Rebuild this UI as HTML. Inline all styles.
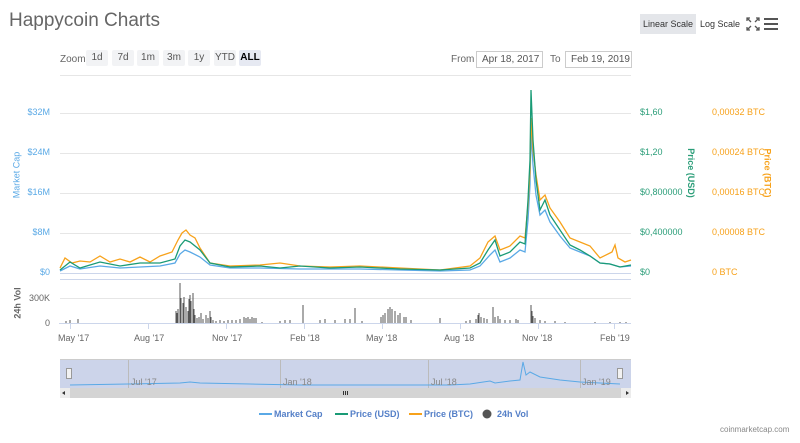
<!DOCTYPE html>
<html><head><meta charset="utf-8"><style>
body{margin:0;width:800px;height:443px;background:#fff;font-family:"Liberation Sans",sans-serif;overflow:hidden;position:relative}
.a{position:absolute;white-space:nowrap}
.btn{position:absolute;top:50px;height:16px;background:#f2f3f5;font-size:10px;color:#555;text-align:center;line-height:16px;border-radius:2px}
.in{position:absolute;top:51px;height:15px;border:1px solid #ccc;font-size:10px;color:#555;line-height:15px;padding-left:5px}
.ly{font-size:9px;color:#5aa9e6;text-align:right;width:50px;left:0}
.g{font-size:9px;color:#2a9d78;left:640px}
.o{font-size:9px;color:#f7a21b;left:712px}
.x{font-size:9px;color:#666;top:333px}
</style></head><body>
<div class="a" style="left:9px;top:10px;font-size:19px;color:#666">Happycoin Charts</div>
<div class="a" style="left:640px;top:14px;width:56px;height:20px;background:#e4e6ea;font-size:9px;color:#333;line-height:20px;text-align:center">Linear Scale</div>
<div class="a" style="left:700px;top:14px;font-size:9px;color:#333;line-height:20px">Log Scale</div>
<svg class="a" style="left:746px;top:17px" width="14" height="14"><g stroke="#555" stroke-width="1.3" fill="none"><path d="M1 4V1H4M10 1H13V4M13 10V13H10M4 13H1V10M1 1L5 5M13 1L9 5M13 13L9 9M1 13L5 9"/></g></svg>
<svg class="a" style="left:764px;top:18px" width="14" height="12"><g fill="#555"><rect y="0" width="14" height="2"/><rect y="5" width="14" height="2"/><rect y="10" width="14" height="2"/></g></svg>
<div class="a" style="left:60px;top:54px;font-size:10px;color:#666">Zoom</div>
<div class="btn" style="left:86px;width:22px">1d</div>
<div class="btn" style="left:112px;width:22px">7d</div>
<div class="btn" style="left:137px;width:22px">1m</div>
<div class="btn" style="left:163px;width:22px">3m</div>
<div class="btn" style="left:188px;width:22px">1y</div>
<div class="btn" style="left:214px;width:22px">YTD</div>
<div class="btn" style="left:239px;width:22px;background:#e6e9f2;color:#000;font-weight:bold">ALL</div>
<div class="a" style="left:451px;top:54px;font-size:10px;color:#666">From</div>
<div class="in" style="left:476px;width:60px">Apr 18, 2017</div>
<div class="a" style="left:550px;top:54px;font-size:10px;color:#666">To</div>
<div class="in" style="left:565px;width:60px">Feb 19, 2019</div>
<div class="a ly" style="top:107px">$32M</div>
<div class="a ly" style="top:147px">$24M</div>
<div class="a ly" style="top:187px">$16M</div>
<div class="a ly" style="top:227px">$8M</div>
<div class="a ly" style="top:267px">$0</div>
<div class="a" style="left:-7px;top:170px;transform:rotate(-90deg);font-size:9px;color:#5aa9e6">Market Cap</div>
<div class="a" style="left:2px;top:298px;transform:rotate(-90deg);font-size:9px;color:#666;font-weight:bold">24h Vol</div>
<div class="a ly" style="top:293px;color:#666">300K</div>
<div class="a ly" style="top:318px;color:#666">0</div>
<div class="a g" style="top:107px">$1,60</div>
<div class="a g" style="top:147px">$1,20</div>
<div class="a g" style="top:187px">$0,800000</div>
<div class="a g" style="top:227px">$0,400000</div>
<div class="a g" style="top:267px">$0</div>
<div class="a o" style="top:107px">0,00032 BTC</div>
<div class="a o" style="top:147px">0,00024 BTC</div>
<div class="a o" style="top:187px">0,00016 BTC</div>
<div class="a o" style="top:227px">0,00008 BTC</div>
<div class="a o" style="top:267px">0 BTC</div>
<div class="a" style="left:666px;top:168px;transform:rotate(90deg);font-size:9px;color:#2a9d78;font-weight:bold">Price (USD)</div>
<div class="a" style="left:743px;top:168px;transform:rotate(90deg);font-size:9px;color:#f7a21b;font-weight:bold">Price (BTC)</div>
<svg class="a" style="left:0;top:0" width="800" height="443">
<g stroke="#e6e6e6" stroke-width="1"><path d="M60 75.5H631M60 113.5H631M60 153.5H631M60 193.5H631M60 233.5H631M60 298.5H631"/></g>
<path d="M60 273.5H631M59 323.5H631M60 279.5H631" stroke="#ccd6eb"/>
<g stroke="#ccd6eb"><path d="M70.5 324v5M148.5 324v5M226.5 324v5M304.5 324v5M382.5 324v5M460.5 324v5M538.5 324v5M614.5 324v5"/></g>
<g stroke="#555" stroke-width="1">
<path d="M66 323v-2M70 323v-3M78 323v-4M176 323v-12M177 323v-10M178 323v-14M180 323v-40M181 323v-25M183 323v-20M184 323v-26M186 323v-16M188 323v-12M189 323v-24M190 323v-28M191 323v-22M193 323v-30M194 323v-14M195 323v-8M197 323v-5M199 323v-6M201 323v-10M203 323v-4M206 323v-8M208 323v-5M210 323v-12M211 323v-6M213 323v-3M216 323v-2M220 323v-3M224 323v-2M228 323v-3M232 323v-3M236 323v-3M240 323v-4M244 323v-6M246 323v-5M248 323v-6M250 323v-4M252 323v-6M254 323v-5M256 323v-5M262 323v-1M280 323v-2M285 323v-3M290 323v-3M303 323v-18M320 323v-3M325 323v-4M335 323v-3M345 323v-4M350 323v-4M355 323v-15M362 323v-2M381 323v-6M383 323v-8M385 323v-10M388 323v-14M390 323v-16M392 323v-14M395 323v-12M398 323v-8M400 323v-10M404 323v-6M406 323v-6M411 323v-3M440 323v-5M466 323v-2M470 323v-3M476 323v-4M478 323v-8M479 323v-10M481 323v-6M484 323v-5M487 323v-4M493 323v-16M495 323v-6M498 323v-7M500 323v-4M505 323v-3M510 323v-3M516 323v-4M518 323v-3M531 323v-18M532 323v-12M533 323v-7M535 323v-5M540 323v-3M545 323v-2M555 323v-2M565 323v-1M595 323v-1M610 323v-1M620 323v-1M626 323v-1"/></g>
<polyline fill="none" stroke="#5aa9e6" stroke-width="1.3" points="60,271 70,266 80,269 100,266 120,268 140,267 160,266 175,263 180,254 185,250 190,252 200,257 210,265 230,268 260,268 300,269 360,269 400,270 440,271 470,270 480,266 490,255 495,250 500,262 510,258 520,250 525,252 528,220 530,185 531,132 533,165 536,195 540,215 545,210 550,222 560,236 570,248 580,252 590,256 600,263 610,264 620,267 631,266"/>
<polyline fill="none" stroke="#f7a21b" stroke-width="1.3" points="60,268 65,258 72,263 80,261 90,262 100,256 110,262 120,259 130,262 140,257 150,262 160,256 172,252 178,240 182,233 186,230 190,235 195,238 200,248 210,263 230,266 260,265 280,263 300,266 330,267 360,266 400,268 440,270 470,266 480,258 488,242 495,236 500,250 510,246 520,236 525,238 528,205 530,172 531,118 533,150 536,175 540,200 545,195 550,208 560,222 570,238 580,242 590,246 600,258 612,252 615,245 618,258 625,262 631,260"/>
<polyline fill="none" stroke="#1a9b76" stroke-width="1.3" points="60,270 70,262 80,268 100,262 120,266 140,263 160,263 175,259 180,246 185,240 190,242 200,250 210,263 230,267 260,266 280,268 300,266 330,268 360,267 400,269 440,270 470,268 480,263 488,250 495,240 500,256 510,252 520,242 525,244 528,200 530,160 531,90 533,140 536,180 540,210 545,200 550,215 560,230 570,245 580,250 590,256 600,263 610,264 620,267 631,265"/>
<rect x="60" y="360" width="571" height="28" fill="#ccd4ea"/>
<path d="M60 359.5H631" stroke="#ccc"/>
<g stroke="#bbb"><path d="M128.5 360v28M280.5 360v28M428.5 360v28M580.5 360v28"/></g>
<polyline fill="none" stroke="#5aa9e6" points="70,385 130,384 180,383 190,382 200,383 250,384 300,385 380,385 450,385 470,384 490,381 495,383 510,381 520,380 523,362 526,375 530,372 540,377 560,380 580,382 600,383 620,384"/>
<g font-size="9" fill="#888"><text x="131" y="385">Jul '17</text><text x="283" y="385">Jan '18</text><text x="431" y="385">Jul '18</text><text x="582" y="385">Jan '19</text></g>
<rect x="60" y="388" width="571" height="10" fill="#d4d4d4"/>
<rect x="60" y="388" width="10" height="10" fill="#ececec"/><rect x="621" y="388" width="10" height="10" fill="#ececec"/>
<path d="M62 393l3-2v4zM629 393l-3-2v4z" fill="#333"/>
<path d="M343.5 391v4M345.5 391v4M347.5 391v4" stroke="#333"/>
<rect x="66.5" y="368.5" width="5" height="10" fill="#f2f2f2" stroke="#999"/>
<rect x="617.5" y="368.5" width="5" height="10" fill="#f2f2f2" stroke="#999"/>
<path d="M259 414h13" stroke="#5aa9e6" stroke-width="2"/>
<path d="M335 414h13" stroke="#1a9b76" stroke-width="2"/>
<path d="M409 414h13" stroke="#f7a21b" stroke-width="2"/>
<circle cx="487" cy="414" r="4.5" fill="#555"/>
<g font-size="9" font-weight="bold" fill="#5580c8"><text x="274" y="417">Market Cap</text><text x="350" y="417">Price (USD)</text><text x="424" y="417">Price (BTC)</text><text x="497" y="417">24h Vol</text></g>
</svg>
<div class="a x" style="left:58px">May '17</div>
<div class="a x" style="left:134px">Aug '17</div>
<div class="a x" style="left:212px">Nov '17</div>
<div class="a x" style="left:290px">Feb '18</div>
<div class="a x" style="left:366px">May '18</div>
<div class="a x" style="left:444px">Aug '18</div>
<div class="a x" style="left:522px">Nov '18</div>
<div class="a x" style="left:600px">Feb '19</div>
<div class="a" style="left:720px;top:425px;font-size:8px;color:#888">coinmarketcap.com</div>
</body></html>
